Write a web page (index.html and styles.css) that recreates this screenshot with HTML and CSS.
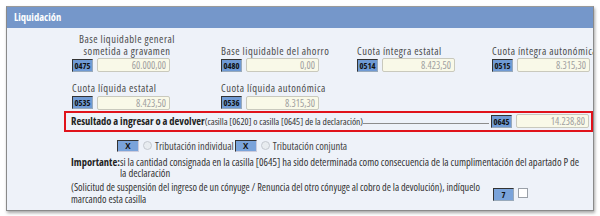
FILE: index.html
```html
<!DOCTYPE html>
<html lang="es">
<head>
  <meta charset="UTF-8" />
  <title>Liquidación</title>
  <link rel="stylesheet" href="styles.css">
</head>
<body>
  <div class="panel">
    <div class="panel-head">Liquidación</div>
    <div class="panel-body">
      <div class="fields-grid">
        <div class="field">
          <div class="field-label label-center">Base liquidable general<br>sometida a gravamen</div>
          <div class="field-row"><span class="code">0475</span><input class="amount" type="text" value="60.000,00" readonly></div>
        </div>
        <div class="field">
          <div class="field-label">Base liquidable del ahorro</div>
          <div class="field-row"><span class="code">0480</span><input class="amount" type="text" value="0,00" readonly></div>
        </div>
        <div class="field">
          <div class="field-label">Cuota íntegra estatal</div>
          <div class="field-row"><span class="code">0514</span><input class="amount" type="text" value="8.423,50" readonly></div>
        </div>
        <div class="field">
          <div class="field-label">Cuota íntegra autonómica</div>
          <div class="field-row"><span class="code">0515</span><input class="amount" type="text" value="8.315,30" readonly></div>
        </div>
        <div class="field">
          <div class="field-label">Cuota líquida estatal</div>
          <div class="field-row"><span class="code">0535</span><input class="amount" type="text" value="8.423,50" readonly></div>
        </div>
        <div class="field">
          <div class="field-label">Cuota líquida autonómica</div>
          <div class="field-row"><span class="code">0536</span><input class="amount" type="text" value="8.315,30" readonly></div>
        </div>
      </div>

      <div class="result-box">
        <span class="result-title">Resultado a ingresar o a devolver</span>
        <span class="result-note">(casilla [0620] o casilla [0645] de la declaración)</span>
        <span class="leader"></span>
        <span class="code">0645</span><input class="amount" type="text" value="14.238,80" readonly>
      </div>

      <div class="tax-row">
        <button class="btn-x">X</button>
        <span class="radio"></span>
        <span class="tax-label">Tributación individual</span>
        <button class="btn-x">X</button>
        <span class="radio"></span>
        <span class="tax-label">Tributación conjunta</span>
      </div>

      <div class="notice">
        <span class="notice-title">Importante:</span>
        <span class="notice-text">si la cantidad consignada en la casilla [0645] ha sido determinada como consecuencia de la cumplimentación del apartado P de la declaración</span>
      </div>

      <div class="suspension">
        <span class="suspension-text">(Solicitud de suspensión del ingreso de un cónyuge / Renuncia del otro cónyuge al cobro de la devolución), indíquelo marcando esta casilla</span>
        <span class="code code-light">7</span>
        <span class="check"></span>
      </div>
    </div>
  </div>
</body>
</html>
```

FILE: styles.css
```css
body {
  margin: 0;
  padding: 6px;
  background: #fff;
  font-family: "Open Sans", sans-serif;
  font-stretch: 80%;
  font-size: 10.5px;
  color: #333;
}
.panel {
  width: 588px;
  height: 205px;
  border: 1px solid #8a8a8a;
  border-top-color: #9a9a9a;
  background: #eef2f9;
  box-shadow: 1px 2px 3px rgba(0, 0, 0, 0.35);
  box-sizing: border-box;
  overflow: hidden;
}
.panel-head {
  height: 21px;
  line-height: 21px;
  padding-left: 7px;
  background: #7597ca;
  color: #fff;
  font-weight: bold;
  font-size: 10.5px;
}
.panel-body {
  padding: 6px 0 0 57px;
}
.fields-grid {
  display: grid;
  grid-template-columns: 149px 136px 135px 1fr;
  align-items: end;
  row-gap: 11px;
  margin-left: 8px;
}
.field-label {
  font-size: 10.5px;
  letter-spacing: 0.5px;
  line-height: 11.5px;
  margin-bottom: 1px;
  white-space: nowrap;
  color: #4a4a4a;
}
.label-center {
  width: 110px;
  text-align: center;
}
.field-row {
  display: flex;
  align-items: center;
  gap: 4px;
}
.code {
  display: inline-block;
  width: 21px;
  height: 13px;
  line-height: 12px;
  box-sizing: border-box;
  background: #6f9ad4;
  border: 1px solid #333;
  border-right-color: #9ab;
  border-bottom-color: #9ab;
  color: #111;
  font-weight: bold;
  font-size: 8.5px;
  text-align: center;
}
.amount {
  width: 73px;
  height: 14px;
  box-sizing: border-box;
  padding: 0 3px;
  margin: 0;
  background: #f9f9e8;
  border: 1px solid #c9c9bd;
  border-radius: 2px;
  color: #a0a0a0;
  font-family: inherit;
  font-stretch: 80%;
  font-size: 10px;
  text-align: right;
}
.result-box {
  display: flex;
  align-items: center;
  width: 529px;
  height: 21px;
  margin-top: 1px;
  padding: 0 2px 0 5px;
  border: 2px solid #e0131b;
  box-sizing: border-box;
  color: #222;
  white-space: nowrap;
}
.result-title {
  font-weight: bold;
}
.result-note {
  font-size: 9.5px;
  color: #333;
}
.leader {
  flex: 1;
  align-self: center;
  height: 4px;
  border-bottom: 1px solid #8c8c8c;
  margin-right: 2px;
}
.result-box .amount {
  margin-left: 4px;
}
.tax-row {
  display: flex;
  align-items: center;
  height: 12px;
  margin: 8px 0 0 53px;
}
.btn-x {
  width: 22px;
  height: 12px;
  padding: 0;
  margin: 0;
  background: #7aa3da;
  border: 1px solid #333;
  border-right-color: #ccd;
  border-bottom-color: #ccd;
  font-family: inherit;
  font-size: 8px;
  font-weight: bold;
  color: #111;
  line-height: 10px;
}
.radio {
  width: 7px;
  height: 7px;
  margin: 0 3px 0 4px;
  border-radius: 50%;
  border: 1px solid #c4c9d0;
  background: #e8ecf0;
}
.tax-label {
  color: #444;
  margin-right: 1px;
}
.notice {
  display: flex;
  margin: 5px 0 0 7px;
  width: 515px;
  line-height: 11.5px;
}
.notice-title {
  font-weight: bold;
  color: #222;
  white-space: nowrap;
}
.suspension {
  display: flex;
  align-items: center;
  margin: 1px 0 0 7px;
  width: 522px;
  line-height: 12px;
}
.suspension-text {
  width: 421px;
  font-size: 10.2px;
}
.code-light {
  margin: 4px 4px 0 1px;
  background: #7aa3da;
}
.check {
  width: 10px;
  height: 10px;
  margin-top: 1px;
  background: #fff;
  border: 1px solid #9aa0a8;
  box-sizing: border-box;
}
```
